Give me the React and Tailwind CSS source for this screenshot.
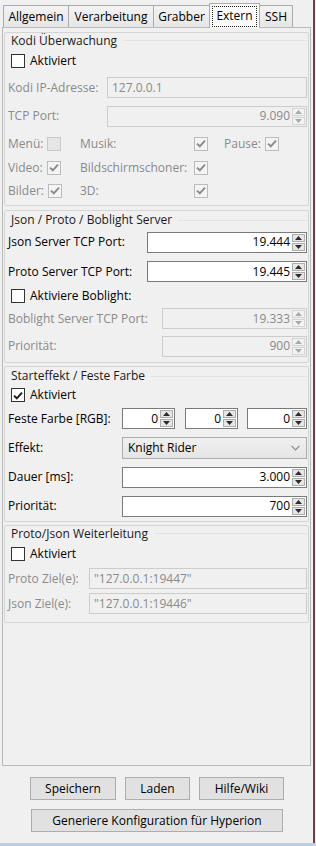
import React from "react";

const font = "font-['Open_Sans','Noto_Sans',sans-serif]";

function Check({ checked, disabled }) {
  const box = disabled
    ? checked
      ? "bg-[#f4f4f4] border-[#bcbcbc]"
      : "bg-[#e6e6e6] border-[#c8c8c8]"
    : "bg-white border-[#333333]";
  return (
    <span className={`flex h-[14px] w-[14px] shrink-0 items-center justify-center border ${box}`}>
      {checked && (
        <svg width="10" height="9" viewBox="0 0 10 9">
          <path d="M1 4.6 L3.8 7.3 L9 1.6" fill="none" stroke={disabled ? "#8c8c8c" : "#1e1e1e"} strokeWidth="2" />
        </svg>
      )}
    </span>
  );
}

function Arrows({ disabled }) {
  const c = disabled ? "#a9a9a9" : "#2b2b2b";
  const btn = disabled ? "border-[#d4d4d4] bg-[#f3f3f3]" : "border-[#acacac] bg-[#e6e6e6]";
  return (
    <div className="flex h-full w-[13px] shrink-0 flex-col gap-[1px] py-[1px]">
      <div className={`flex flex-1 items-center justify-center border ${btn}`}>
        <svg width="7" height="4" viewBox="0 0 7 4">
          <path d="M0 4 L3.5 0 L7 4Z" fill={c} />
        </svg>
      </div>
      <div className={`flex flex-1 items-center justify-center border ${btn}`}>
        <svg width="7" height="4" viewBox="0 0 7 4">
          <path d="M0 0 L3.5 4 L7 0Z" fill={c} />
        </svg>
      </div>
    </div>
  );
}

function Spin({ value, disabled, className = "flex-1" }) {
  return (
    <div
      className={`flex h-[21px] items-center border pl-1 pr-[1px] ${
        disabled ? "border-[#cccccc] bg-[#f0f0f0] text-[#8a8a8a]" : "border-[#7a7a7a] bg-white text-black"
      } ${className}`}
    >
      <span className="flex-1 pr-[2px] text-right leading-none">{value}</span>
      <Arrows disabled={disabled} />
    </div>
  );
}

function TextField({ value, disabled }) {
  return (
    <div
      className={`flex h-[21px] flex-1 items-center border pl-[4px] leading-none ${
        disabled ? "border-[#cccccc] bg-[#f0f0f0] text-[#8a8a8a]" : "border-[#7a7a7a] bg-white text-black"
      }`}
    >
      {value}
    </div>
  );
}

function Group({ title, children, className = "" }) {
  return (
    <div className={`flex flex-col rounded-[2px] border border-[#d5d5d5] ${className}`}>
      {children}
    </div>
  );
}

function Title({ text, h }) {
  return (
    <div className={`flex items-center pl-[6px] pr-[1px] ${h}`}>
      <span className="leading-none text-[#1a1a1a]">{text}</span>
      <span className="ml-[6px] h-px flex-1 bg-[#e2e2e2]" />
    </div>
  );
}

function CheckRow({ label, checked, disabled, h }) {
  return (
    <div className={`flex items-center pl-[6px] ${h}`}>
      <Check checked={checked} disabled={disabled} />
      <span className={`ml-[5px] leading-none ${disabled ? "text-[#8a8a8a]" : "text-black"}`}>{label}</span>
    </div>
  );
}

function Row({ label, lw, h, disabled, children }) {
  return (
    <div className={`flex items-center pl-[3px] pr-[1px] ${h}`}>
      <span className={`shrink-0 leading-none ${lw} ${disabled ? "text-[#8a8a8a]" : "text-black"}`}>{label}</span>
      {children}
    </div>
  );
}

function Tab({ label, w, selected, first }) {
  if (selected) {
    return (
      <div
        className={`relative z-10 -mb-[1px] -ml-[1px] flex h-[25px] items-center justify-center border border-b-0 border-[#acacac] bg-[#fbfbfb] ${w}`}
      >
        <span className="flex h-[21px] items-center border border-dotted border-[#222] px-[3px] leading-none">
          {label}
        </span>
      </div>
    );
  }
  return (
    <div
      className={`flex h-[22px] items-center justify-center border border-b-0 border-[#acacac] bg-gradient-to-b from-[#f3f3f3] to-[#e6e6e6] leading-none ${
        first ? "" : "-ml-[1px]"
      } ${w}`}
    >
      {label}
    </div>
  );
}

function Button({ label, w }) {
  return (
    <div className={`flex h-[23px] items-center justify-center border border-[#adadad] bg-[#e1e1e1] leading-none ${w}`}>
      {label}
    </div>
  );
}

export default function App() {
  const dis = "text-[#8a8a8a]";
  return (
    <div className={`flex h-[846px] w-[316px] flex-col bg-[#f0f0f0] text-[12px] text-black ${font}`}>
      <div className="flex h-[843px] flex-row">
        <div className="flex w-[313px] flex-col pt-[3px]">
          {/* Tabs */}
          <div className="flex h-[24px] items-end pl-[3px]">
            <Tab label="Allgemein" w="w-[66px]" first />
            <Tab label="Verarbeitung" w="w-[86px]" />
            <Tab label="Grabber" w="w-[57px]" />
            <Tab label="Extern" w="w-[51px]" selected />
            <Tab label="SSH" w="w-[34px]" />
          </div>

          {/* Pane */}
          <div className="ml-[2px] flex h-[739px] w-[309px] flex-col border border-[#b9b9b9] bg-[#f0f0f0] px-[1px] pt-[4px]">
            {/* Kodi */}
            <Group>
              <Title text="Kodi Überwachung" h="h-[15px]" />
              <CheckRow label="Aktiviert" h="h-[26px]" />
              <Row label="Kodi IP-Adresse:" lw="w-[99px]" h="h-[27px]" disabled>
                <TextField value="127.0.0.1" disabled />
              </Row>
              <Row label="TCP Port:" lw="w-[99px]" h="h-[30px]" disabled>
                <Spin value="9.090" disabled />
              </Row>
              {[
                [["Menü:", false], ["Musik:", true], ["Pause:", true], "h-[25px]"],
                [["Video:", true], ["Bildschirmschoner:", true], null, "h-[23px]"],
                [["Bilder:", true], ["3D:", true], null, "h-[23px]"],
              ].map(([a, b, c, h], i) => (
                <div key={i} className={`flex items-center pl-[3px] ${h} ${dis}`}>
                  <div className="flex w-[72px] items-center">
                    <span className="mr-[4px] leading-none">{a[0]}</span>
                    <Check checked={a[1]} disabled />
                  </div>
                  <div className="flex w-[144px] items-center">
                    <span className="w-[114px] leading-none">{b[0]}</span>
                    <Check checked={b[1]} disabled />
                  </div>
                  {c && (
                    <div className="flex items-center">
                      <span className="mr-[4px] leading-none">{c[0]}</span>
                      <Check checked={c[1]} disabled />
                    </div>
                  )}
                </div>
              ))}
              <div className="h-[3px]" />
            </Group>

            {/* Json / Proto / Boblight */}
            <Group className="mt-[4px]">
              <Title text="Json / Proto / Boblight Server" h="h-[18px]" />
              <Row label="Json Server TCP Port:" lw="w-[139px]" h="h-[26px]">
                <Spin value="19.444" />
              </Row>
              <Row label="Proto Server TCP Port:" lw="w-[139px]" h="h-[33px]">
                <Spin value="19.445" />
              </Row>
              <CheckRow label="Aktiviere Boblight:" h="h-[15px]" />
              <Row label="Boblight Server TCP Port:" lw="w-[154px]" h="h-[31px]" disabled>
                <Spin value="19.333" disabled />
              </Row>
              <Row label="Priorität:" lw="w-[154px]" h="h-[24px]" disabled>
                <Spin value="900" disabled />
              </Row>
              <div className="h-[4px]" />
            </Group>

            {/* Starteffekt */}
            <Group className="mt-[3px]">
              <Title text="Starteffekt / Feste Farbe" h="h-[18px]" />
              <CheckRow label="Aktiviert" checked h="h-[20px]" />
              <Row label="Feste Farbe [RGB]:" lw="w-[114px]" h="h-[27px]">
                <Spin value="0" className="w-[53px]" />
                <Spin value="0" className="ml-[10px] w-[53px]" />
                <Spin value="0" className="ml-[9px] flex-1" />
              </Row>
              <Row label="Effekt:" lw="w-[114px]" h="h-[31px]">
                <div className="flex h-[22px] flex-1 items-center border border-[#acacac] bg-gradient-to-b from-[#f0f0f0] to-[#e5e5e5] pl-[5px] pr-[6px]">
                  <span className="flex-1 leading-none">Knight Rider</span>
                  <svg width="9" height="6" viewBox="0 0 9 6">
                    <path d="M0.5 0.8 L4.5 4.8 L8.5 0.8" fill="none" stroke="#8a8a8a" strokeWidth="1.2" />
                  </svg>
                </div>
              </Row>
              <Row label="Dauer [ms]:" lw="w-[114px]" h="h-[28px]">
                <Spin value="3.000" />
              </Row>
              <Row label="Priorität:" lw="w-[114px]" h="h-[30px]">
                <Spin value="700" />
              </Row>
            </Group>

            {/* Proto/Json Weiterleitung */}
            <Group className="mt-[3px]">
              <Title text="Proto/Json Weiterleitung" h="h-[15px]" />
              <CheckRow label="Aktiviert" h="h-[25px]" />
              <Row label="Proto Ziel(e):" lw="w-[81px]" h="h-[25px]" disabled>
                <TextField value={'"127.0.0.1:19447"'} disabled />
              </Row>
              <Row label="Json Ziel(e):" lw="w-[81px]" h="h-[25px]" disabled>
                <TextField value={'"127.0.0.1:19446"'} disabled />
              </Row>
              <div className="h-[6px]" />
            </Group>
          </div>

          {/* Buttons */}
          <div className="mt-[11px] flex gap-[9px] pl-[30px]">
            <Button label="Speichern" w="w-[86px]" />
            <Button label="Laden" w="w-[65px]" />
            <Button label="Hilfe/Wiki" w="w-[85px]" />
          </div>
          <div className="ml-[31px] mt-[9px]">
            <Button label="Generiere Konfiguration für Hyperion" w="w-[252px]" />
          </div>
        </div>
        <div className="w-[2px] bg-[#6d3f55]" />
        <div className="w-[1px] bg-[#e8e8e8]" />
      </div>
      <div className="h-[3px] bg-[#b7d0ea]" />
    </div>
  );
}
